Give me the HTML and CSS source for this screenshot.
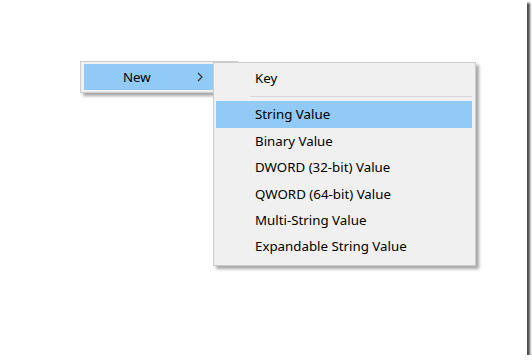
FILE: index.html
```html
<!DOCTYPE html>
<html lang="en">

<head>
    <meta charset="UTF-8">
    <meta name="viewport" content="width=device-width, initial-scale=1.0">
    <title>Registry - New</title>
    <link rel="stylesheet" href="styles.css">
</head>

<body>
    <!-- Screenshot frame -->
    <div class="frame">

        <!-- Parent context menu -->
        <div class="menu parent-menu">
            <div class="menu-item active">
                <span class="label">New</span>
                <svg class="arrow" width="6" height="10" viewBox="0 0 6 10">
                    <path d="M1 1 L5 5 L1 9" fill="none" stroke="#333" stroke-width="1.2"/>
                </svg>
            </div>
        </div>

        <!-- "New" submenu -->
        <div class="menu sub-menu">
            <div class="menu-item">Key</div>
            <div class="separator"></div>
            <div class="menu-item active">String Value</div>
            <div class="menu-item">Binary Value</div>
            <div class="menu-item">DWORD (32-bit) Value</div>
            <div class="menu-item">QWORD (64-bit) Value</div>
            <div class="menu-item">Multi-String Value</div>
            <div class="menu-item">Expandable String Value</div>
        </div>
    </div>
</body>

</html>
```

FILE: styles.css
```css
/* General body styles */
body {
    margin: 0;
    padding: 0;
    background: #ffffff;
    font-family: "Noto Sans", "Open Sans", sans-serif;
    font-size: 13.3px;
    color: #000;
}

/* White picture area with its drop shadow */
.frame {
    position: relative;
    width: 527px;
    height: 355px;
    background: #ffffff;
    box-shadow: 3px 3px 2px rgba(0, 0, 0, 0.7);
}

/* Menu popups */
.menu {
    position: absolute;
    background-color: #f0f0f0;
    border: 1px solid #cccccc;
    box-shadow: 3px 3px 3px rgba(0, 0, 0, 0.35);
}

.menu-item {
    height: 26.4px;
    line-height: 26.4px;
    white-space: nowrap;
}

.menu-item.active {
    background-color: #91c9f7;
}

/* Parent menu with the "New" entry */
.parent-menu {
    left: 80px;
    top: 61px;
    width: 150px;
    padding: 2px 3px;
}

.parent-menu .menu-item {
    display: flex;
    align-items: center;
    padding-left: 39px;
}

.parent-menu .label {
    flex: 1;
}

.parent-menu .arrow {
    margin-right: 31px;
}

/* Submenu */
.sub-menu {
    left: 213px;
    top: 62px;
    width: 256px;
    padding: 2px 3px 5px 2px;
}

.sub-menu .menu-item {
    padding-left: 39px;
}

.separator {
    height: 1px;
    margin: 5px 0 4px 34px;
    background-color: #d7d7d7;
}
```
